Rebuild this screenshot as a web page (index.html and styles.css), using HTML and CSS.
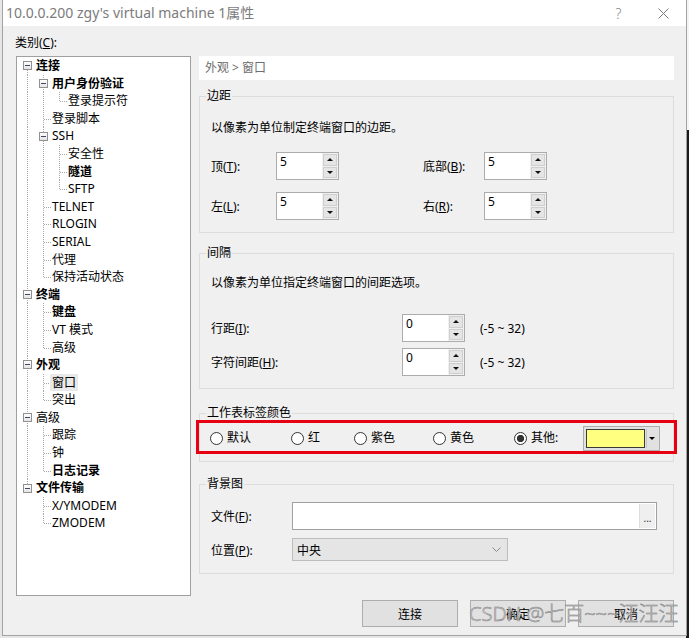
FILE: index.html
```html
<!DOCTYPE html>
<html>
<head>
<meta charset="utf-8">
<link rel="stylesheet" href="styles.css">
</head>
<body>
<div class="dialog">
  <div class="titlebar">
    <div class="title">10.0.0.200 zgy's virtual machine 1属性</div>
    <div class="tb-btn help">?</div>
    <div class="tb-btn close"><svg width="11" height="11" viewBox="0 0 11 11"><path d="M0.5 0.5L10.5 10.5M10.5 0.5L0.5 10.5" stroke="#7a7a7a" stroke-width="1" fill="none"/></svg></div>
  </div>
  <div class="content">
    <div class="cat-label">类别(<u>C</u>):</div>
    <div class="main">
      <div class="tree">
        <div class="row"><span class="c e e-first"><span class="box"></span></span><span class="lbl b">连接</span></div>
        <div class="row"><span class="c v"></span><span class="c e e-mid"><span class="box"></span></span><span class="lbl b">用户身份验证</span></div>
        <div class="row"><span class="c v"></span><span class="c v"></span><span class="c l"></span><span class="lbl">登录提示符</span></div>
        <div class="row"><span class="c v"></span><span class="c t"></span><span class="lbl">登录脚本</span></div>
        <div class="row"><span class="c v"></span><span class="c e e-mid"><span class="box"></span></span><span class="lbl">SSH</span></div>
        <div class="row"><span class="c v"></span><span class="c v"></span><span class="c t"></span><span class="lbl">安全性</span></div>
        <div class="row"><span class="c v"></span><span class="c v"></span><span class="c t"></span><span class="lbl b">隧道</span></div>
        <div class="row"><span class="c v"></span><span class="c v"></span><span class="c l"></span><span class="lbl">SFTP</span></div>
        <div class="row"><span class="c v"></span><span class="c t"></span><span class="lbl">TELNET</span></div>
        <div class="row"><span class="c v"></span><span class="c t"></span><span class="lbl">RLOGIN</span></div>
        <div class="row"><span class="c v"></span><span class="c t"></span><span class="lbl">SERIAL</span></div>
        <div class="row"><span class="c v"></span><span class="c t"></span><span class="lbl">代理</span></div>
        <div class="row"><span class="c v"></span><span class="c l"></span><span class="lbl">保持活动状态</span></div>
        <div class="row"><span class="c e e-mid"><span class="box"></span></span><span class="lbl b">终端</span></div>
        <div class="row"><span class="c v"></span><span class="c t"></span><span class="lbl b">键盘</span></div>
        <div class="row"><span class="c v"></span><span class="c t"></span><span class="lbl">VT 模式</span></div>
        <div class="row"><span class="c v"></span><span class="c l"></span><span class="lbl">高级</span></div>
        <div class="row"><span class="c e e-mid"><span class="box"></span></span><span class="lbl b">外观</span></div>
        <div class="row"><span class="c v"></span><span class="c t"></span><span class="lbl sel">窗口</span></div>
        <div class="row"><span class="c v"></span><span class="c l"></span><span class="lbl">突出</span></div>
        <div class="row"><span class="c e e-mid"><span class="box"></span></span><span class="lbl">高级</span></div>
        <div class="row"><span class="c v"></span><span class="c t"></span><span class="lbl">跟踪</span></div>
        <div class="row"><span class="c v"></span><span class="c t"></span><span class="lbl">钟</span></div>
        <div class="row"><span class="c v"></span><span class="c l"></span><span class="lbl b">日志记录</span></div>
        <div class="row"><span class="c e e-last"><span class="box"></span></span><span class="lbl b">文件传输</span></div>
        <div class="row"><span class="c"></span><span class="c t"></span><span class="lbl">X/YMODEM</span></div>
        <div class="row"><span class="c"></span><span class="c l"></span><span class="lbl">ZMODEM</span></div>
      </div>
      <div class="panel">
        <div class="crumb">外观 &gt; 窗口</div>

        <fieldset class="fs fs-margin">
          <legend>边距</legend>
          <div class="desc">以像素为单位制定终端窗口的边距。</div>
          <div class="grid-margin">
            <span>顶(<u>T</u>):</span>
            <div class="spin"><span class="val">5</span><span class="arrows"><span class="ab"><i class="up"></i></span><span class="ab"><i class="dn"></i></span></span></div>
            <span class="c4">底部(<u>B</u>):</span>
            <div class="spin"><span class="val">5</span><span class="arrows"><span class="ab"><i class="up"></i></span><span class="ab"><i class="dn"></i></span></span></div>
            <span>左(<u>L</u>):</span>
            <div class="spin"><span class="val">5</span><span class="arrows"><span class="ab"><i class="up"></i></span><span class="ab"><i class="dn"></i></span></span></div>
            <span class="c4">右(<u>R</u>):</span>
            <div class="spin"><span class="val">5</span><span class="arrows"><span class="ab"><i class="up"></i></span><span class="ab"><i class="dn"></i></span></span></div>
          </div>
        </fieldset>

        <fieldset class="fs fs-space">
          <legend>间隔</legend>
          <div class="desc">以像素为单位指定终端窗口的间距选项。</div>
          <div class="grid-space">
            <span>行距(<u>I</u>):</span>
            <div class="spin"><span class="val">0</span><span class="arrows"><span class="ab"><i class="up"></i></span><span class="ab"><i class="dn"></i></span></span></div>
            <span class="range">(-5 ~ 32)</span>
            <span>字符间距(<u>H</u>):</span>
            <div class="spin"><span class="val">0</span><span class="arrows"><span class="ab"><i class="up"></i></span><span class="ab"><i class="dn"></i></span></span></div>
            <span class="range">(-5 ~ 32)</span>
          </div>
        </fieldset>

        <fieldset class="fs fs-color">
          <legend>工作表标签颜色</legend>
          <div class="radios">
            <label class="radio w1"><span class="rb"></span>默认</label>
            <label class="radio w2"><span class="rb"></span>红</label>
            <label class="radio w3"><span class="rb"></span>紫色</label>
            <label class="radio w4"><span class="rb"></span>黄色</label>
            <label class="radio w5"><span class="rb on"></span>其他:</label>
            <div class="combo"><span class="swatch"></span><span class="combo-arrow"><i></i></span></div>
          </div>
        </fieldset>

        <fieldset class="fs fs-bg">
          <legend>背景图</legend>
          <div class="frow">
            <span class="flabel">文件(<u>F</u>):</span>
            <div class="file"><span class="file-text"></span><span class="dots">...</span></div>
          </div>
          <div class="frow frow2">
            <span class="flabel">位置(<u>P</u>):</span>
            <div class="select"><span>中央</span><svg width="9" height="5" viewBox="0 0 9 5"><path d="M0.5 0.5L4.5 4.5L8.5 0.5" stroke="#8a8a8a" stroke-width="1" fill="none"/></svg></div>
          </div>
        </fieldset>

        <div class="annot"></div>
      </div>
    </div>
    <div class="buttons">
      <div class="btn">连接</div>
      <div class="btn">确定</div>
      <div class="btn">取消</div>
    </div>
  </div>
  <div class="watermark">CSDN @七百~~~汪汪汪</div>
</div>
</body>
</html>
```

FILE: styles.css
```css
* { box-sizing: border-box; }
html, body { margin: 0; padding: 0; }
body {
  width: 689px;
  height: 638px;
  overflow: hidden;
  background:
    linear-gradient(#f4f4f4 0 130px, #1b1b1b 130px) right top / 3px 100% no-repeat,
    #e6e6e6;
  font-family: "Noto Sans", "Noto Sans CJK SC", sans-serif;
  font-size: 12px;
  color: #000;
}
u { text-decoration: underline; text-underline-offset: 1px; }

.dialog {
  margin-left: 2px;
  width: 685px;
  height: 636px;
  border: 1px solid #a3a3a3;
  border-top: none;
  background: #f0f0f0;
  position: relative;
  display: flex;
  flex-direction: column;
}
.titlebar {
  height: 26px;
  flex: none;
  background: #fff;
  display: flex;
  align-items: center;
}
.title {
  flex: 1;
  padding-left: 3px;
  color: #7c7c7c;
  font-size: 14px;
  line-height: 26px;
  white-space: nowrap;
}
.tb-btn {
  width: 45px;
  height: 26px;
  display: flex;
  align-items: center;
  justify-content: center;
  color: #8a8a8a;
}
.help { font-size: 14px; font-weight: 300; }

.content { padding-top: 9px; }
.cat-label { margin-left: 12px; line-height: 16px; }
.main {
  display: flex;
  margin: 5px 0 0 13px;
  height: 540px;
}

/* tree */
.tree {
  flex: none;
  width: 175px;
  height: 540px;
  background: #fff;
  border: 1px solid #a0a0a0;
  padding-left: 2px;
}
.row { display: flex; height: 17.6px; }
.c { width: 16px; flex: none; background-repeat: no-repeat; }
.v {
  background-image: repeating-linear-gradient(to bottom, #a8a8a8 0 1px, transparent 1px 2px);
  background-size: 1px 100%;
  background-position: 8px 0;
}
.t {
  background-image:
    repeating-linear-gradient(to bottom, #a8a8a8 0 1px, transparent 1px 2px),
    repeating-linear-gradient(to right, #a8a8a8 0 1px, transparent 1px 2px);
  background-size: 1px 100%, 7px 1px;
  background-position: 8px 0, 9px 9px;
}
.l {
  background-image:
    repeating-linear-gradient(to bottom, #a8a8a8 0 1px, transparent 1px 2px),
    repeating-linear-gradient(to right, #a8a8a8 0 1px, transparent 1px 2px);
  background-size: 1px 9px, 7px 1px;
  background-position: 8px 0, 9px 9px;
}
.e {
  display: flex;
  align-items: center;
  padding-left: 4px;
  background-image: repeating-linear-gradient(to bottom, #a8a8a8 0 1px, transparent 1px 2px);
}
.e-first { background-size: 1px 50%; background-position: 8px 100%; }
.e-mid { background-size: 1px 100%; background-position: 8px 0; }
.e-last { background-size: 1px 50%; background-position: 8px 0; }
.box {
  width: 9px;
  height: 9px;
  border: 1px solid #919191;
  background:
    linear-gradient(#3c4a60, #3c4a60) center / 5px 1px no-repeat,
    linear-gradient(#ffffff, #e4e4e4);
}
.lbl { padding: 0 1px; line-height: 17.6px; white-space: nowrap; }
.b { font-weight: 700; }
.sel { background: #e9e9e9; padding: 0 2px; margin-left: -1px; }

/* panel */
.panel { width: 475px; margin-left: 8px; position: relative; }
.crumb {
  height: 24px;
  line-height: 24px;
  background: #fff;
  color: #6d6d6d;
  padding-left: 6px;
}
.fs {
  margin: 0;
  padding: 0;
  min-width: 0;
  border: 1px solid #dcdcdc;
}
.fs legend {
  margin-left: 6px;
  padding: 0 1px;
  line-height: 16px;
}
.desc { margin-left: 11px; line-height: 16px; white-space: nowrap; }

.fs-margin { margin-top: 8px; padding-bottom: 12px; }
.fs-margin .desc { margin-top: 16px; }
.grid-margin {
  margin: 16px 0 0 11px;
  display: grid;
  grid-template-columns: 65px 63px 84px 61px 63px;
  grid-auto-rows: 28px;
  row-gap: 12px;
  align-items: center;
}
.c4 { grid-column: 4; }

.fs-space { margin-top: 12px; padding-bottom: 12px; }
.fs-space .desc { margin-top: 14px; }
.grid-space {
  margin: 23px 0 0 11px;
  display: grid;
  grid-template-columns: 191px 63px auto;
  grid-auto-rows: 28px;
  row-gap: 6px;
  align-items: center;
}
.range { padding-left: 15px; }

.spin {
  width: 63px;
  height: 28px;
  display: flex;
  background: #fff;
  border: 1px solid #acacac;
}
.val { flex: 1; padding: 1px 0 0 3px; line-height: 16px; }
.arrows {
  width: 16px;
  display: flex;
  flex-direction: column;
  gap: 1px;
  padding: 1px;
  background: #f0f0f0;
}
.ab {
  flex: 1;
  background: #e5e5e5;
  border: 1px solid #cfcfcf;
  display: flex;
  align-items: center;
  justify-content: center;
}
.ab i { width: 0; height: 0; border-left: 3px solid transparent; border-right: 3px solid transparent; }
.ab .up { border-bottom: 3px solid #111; }
.ab .dn { border-top: 3px solid #111; }

.fs-color { margin-top: 16px; padding-bottom: 6px; }
.radios {
  height: 34px;
  display: flex;
  align-items: center;
  padding-left: 10px;
}
.radio { display: flex; align-items: center; flex: none; line-height: 16px; }
.w1 { width: 81px; }
.w2 { width: 63px; }
.w3 { width: 79px; }
.w4 { width: 81px; }
.w5 { width: 69px; }
.rb {
  width: 13px;
  height: 13px;
  border: 1px solid #333;
  border-radius: 50%;
  background: #fff;
  margin-right: 4px;
  flex: none;
}
.rb.on { background: radial-gradient(circle, #333 0 3.4px, #fff 3.9px); }
.combo {
  width: 77px;
  height: 25px;
  border: 1px solid #adadad;
  background: #e1e1e1;
  display: flex;
  padding: 2px;
  gap: 1px;
}
.swatch { flex: 1; background: #ffff80; border: 1px solid #3a3a3a; }
.combo-arrow {
  width: 11px;
  border-left: 1px solid #c4c4c4;
  display: flex;
  align-items: center;
  justify-content: center;
}
.combo-arrow i { width: 0; height: 0; border-left: 3px solid transparent; border-right: 3px solid transparent; border-top: 3px solid #000; }

.fs-bg { margin-top: 14px; padding-bottom: 12px; }
.frow { display: flex; align-items: center; margin: 10px 0 0 11px; }
.frow2 { margin-top: 8px; }
.flabel { width: 81px; flex: none; }
.file {
  width: 365px;
  height: 28px;
  border: 1px solid #a0a0a0;
  background: #fff;
  display: flex;
}
.file-text { flex: 1; }
.dots {
  width: 16px;
  margin: 1px;
  background: #efefef;
  border-left: 1px solid #dcdcdc;
  font-size: 10px;
  line-height: 10px;
  display: flex;
  align-items: flex-end;
  justify-content: center;
  padding-bottom: 5px;
  color: #333;
}
.select {
  width: 216px;
  height: 23px;
  border: 1px solid #bdbdbd;
  background: #e5e5e5;
  display: flex;
  align-items: center;
  justify-content: space-between;
  padding: 0 6px 0 4px;
}

.annot {
  position: absolute;
  left: -3px;
  top: 364px;
  width: 481px;
  height: 34px;
  border: 3px solid #e60012;
}

.buttons {
  display: flex;
  justify-content: flex-end;
  gap: 12px;
  margin-top: 4px;
  padding-right: 12px;
}
.btn {
  width: 96px;
  height: 27px;
  background: #e1e1e1;
  border: 1px solid #adadad;
  display: flex;
  align-items: center;
  justify-content: center;
}

.watermark {
  position: absolute;
  left: 466px;
  top: 600px;
  font-family: "Noto Sans", "Noto Sans CJK SC", sans-serif;
  font-size: 20px;
  line-height: 28px;
  font-weight: 300;
  color: #dadada;
  -webkit-text-stroke: 0.5px #7d7d7d;
  white-space: nowrap;
}
```
